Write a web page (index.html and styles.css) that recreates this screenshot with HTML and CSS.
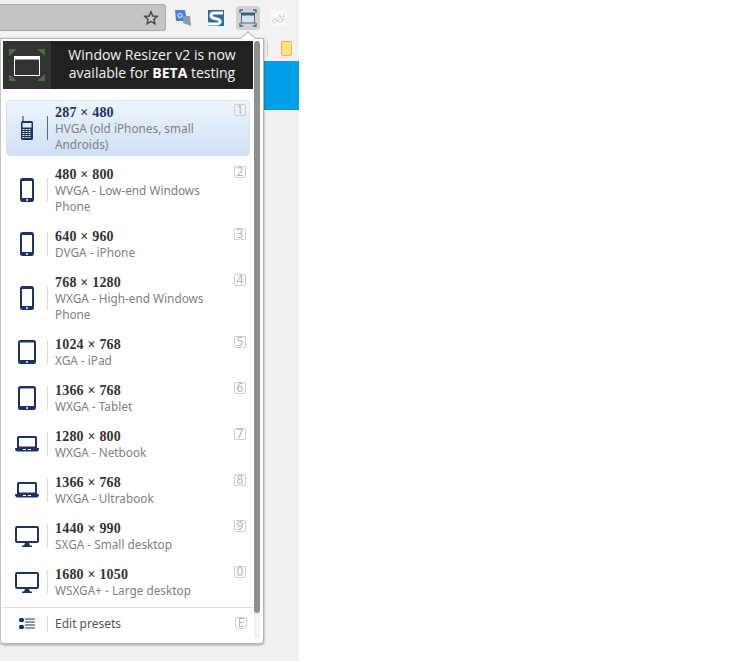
FILE: index.html
```html
<!DOCTYPE html>
<html lang="en">
<head>
<meta charset="utf-8">
<title>Window Resizer</title>
<link rel="stylesheet" href="styles.css">
</head>
<body>
<svg class="defs" width="0" height="0">
<defs>
<symbol id="i-feature" viewBox="0 0 24 24"><path fill="currentColor" d="M7.500 5V0h1v5h8A1.500 1.500 0 0 1 18 6.500v16a1.500 1.500 0 0 1-1.500 1.500h-9A1.500 1.500 0 0 1 6 22.500v-16A1.500 1.500 0 0 1 7.500 5z"/><rect x="7.500" y="7" width="9" height="4.500" fill="#e3edf8"/><path stroke="#e3edf8" stroke-width="1" stroke-dasharray="2 1" d="M7.500 13.500h9M7.500 15.500h9M7.500 17.500h9M7.500 19.500h9M7.500 21.500h9"/></symbol>
<symbol id="i-phone" viewBox="0 0 24 24"><path fill="currentColor" fill-rule="evenodd" d="M7.500 0h9A2.500 2.500 0 0 1 19 2.500v19a2.500 2.500 0 0 1-2.500 2.500h-9A2.500 2.500 0 0 1 5 21.500v-19A2.500 2.500 0 0 1 7.500 0zM7 3v17h10V3z"/><circle cx="12" cy="22" r="1" fill="#fff"/></symbol>
<symbol id="i-tablet" viewBox="0 0 24 24"><path fill="currentColor" fill-rule="evenodd" d="M5.500 0h13A2.500 2.500 0 0 1 21 2.500v19a2.500 2.500 0 0 1-2.500 2.500h-13A2.500 2.500 0 0 1 3 21.500v-19A2.500 2.500 0 0 1 5.500 0zM5 2.500V20h14V2.500z"/><circle cx="12" cy="22" r="1" fill="#fff"/></symbol>
<symbol id="i-laptop" viewBox="0 0 24 16"><path fill="currentColor" fill-rule="evenodd" d="M3.500 0h17A1.500 1.500 0 0 1 22 1.500V12H2V1.500A1.500 1.500 0 0 1 3.500 0zM4 2v8.500h16V2z"/><path fill="currentColor" d="M.5 12h23c.3 0 .5.200.5.500 0 1.800-1 3-2.500 3h-19C1 15.500 0 14.300 0 12.500c0-.3.200-.5.500-.5z"/><path stroke="#fff" d="M8 13.500h3M13 13.500h3"/></symbol>
<symbol id="i-desktop" viewBox="0 0 24 21"><path fill="currentColor" fill-rule="evenodd" d="M2 0h20a2 2 0 0 1 2 2v13a2 2 0 0 1-2 2H2a2 2 0 0 1-2-2V2a2 2 0 0 1 2-2zm0 2v13h20V2z"/><path fill="currentColor" d="M10 17h4l1 2.500h2V21H7v-1.500h2z"/></symbol>
</defs>
</svg>
<div class="browser">
  <header class="toolbar">
    <div class="omnibox">
      <svg class="star" viewBox="0 0 16 16"><path fill="none" stroke="#444" stroke-width="1.400" d="M8 1.800l1.800 4.200 4.500.4-3.400 3 1 4.400L8 11.500l-3.900 2.300 1-4.400-3.400-3 4.500-.4z"/></svg>
    </div>
    <div class="ext ext-wide">
      <svg class="ext-icon" viewBox="0 0 16 16"><path fill="#4a80d8" d="M0 0h10l2 11H1z"/><path fill="#8b99a8" d="M8 6h7l1 10-8-3z"/><circle cx="5" cy="5.500" r="2" fill="none" stroke="#fff"/></svg>
    </div>
    <div class="ext">
      <svg class="ext-icon" viewBox="0 0 16 16"><rect width="16" height="16" fill="#336d9a"/><path fill="none" stroke="#fff" stroke-width="3" d="M15 3H6Q3 3 3 5.500T7 8.500 12 11 9 14H0"/></svg>
    </div>
    <div class="ext ext-active">
      <svg class="ext-icon" viewBox="0 0 18 18"><path fill="none" stroke="#3e6f79" stroke-width="1.300" d="M1 4V1h3M14 1h3v3M17 14v3h-3M4 17H1v-3"/><rect x="2.500" y="4" width="13" height="10" fill="#d9e2ea" stroke="#4c6a84"/><rect x="2.500" y="4" width="13" height="2.500" fill="#3f617f"/></svg>
    </div>
    <div class="ext">
      <svg class="ext-icon" viewBox="0 0 16 16"><rect width="16" height="16" fill="#f9f9f9"/><path fill="none" stroke="#a8a8a8" stroke-dasharray="1 1" d="M1 11l3-2 2 2 3-6 2 5 3-7M3 13l4-2 3 1 4-3"/></svg>
    </div>
  </header>
  <nav class="bookmarks">
    <span class="bm-divider"></span>
    <span class="bm-note"></span>
  </nav>
  <div class="hero-strip"></div>
  <div class="window-rest"></div>
</div>

<section class="popup">
  <span class="popup-arrow"></span>
  <div class="promo">
    <div class="promo-icon">
      <svg viewBox="0 0 48 48" width="48" height="48">
        <path fill="#47703f" d="M6 8h8l-8 7zM42 8h-8l8 7zM6 40h8l-8-7zM42 40h-8l8-7z"/>
        <rect x="11.500" y="15.500" width="25" height="19" fill="#333" stroke="#fff"/>
        <rect x="11" y="15" width="26" height="3.500" fill="#fff"/>
      </svg>
    </div>
    <p class="promo-text">Window Resizer v2 is now<br>available for <b>BETA</b> testing</p>
  </div>
  <ul class="presets">
    <li class="preset preset-selected">
      <span class="preset-icon"><svg width="24" height="24"><use href="#i-feature"/></svg></span>
      <div class="preset-body"><strong>287 × 480</strong><span>HVGA (old iPhones, small Androids)</span></div>
      <kbd>1</kbd>
    </li>
    <li class="preset">
      <span class="preset-icon"><svg width="24" height="24"><use href="#i-phone"/></svg></span>
      <div class="preset-body"><strong>480 × 800</strong><span>WVGA - Low-end Windows Phone</span></div>
      <kbd>2</kbd>
    </li>
    <li class="preset">
      <span class="preset-icon"><svg width="24" height="24"><use href="#i-phone"/></svg></span>
      <div class="preset-body"><strong>640 × 960</strong><span>DVGA - iPhone</span></div>
      <kbd>3</kbd>
    </li>
    <li class="preset">
      <span class="preset-icon"><svg width="24" height="24"><use href="#i-phone"/></svg></span>
      <div class="preset-body"><strong>768 × 1280</strong><span>WXGA - High-end Windows Phone</span></div>
      <kbd>4</kbd>
    </li>
    <li class="preset">
      <span class="preset-icon"><svg width="24" height="24"><use href="#i-tablet"/></svg></span>
      <div class="preset-body"><strong>1024 × 768</strong><span>XGA - iPad</span></div>
      <kbd>5</kbd>
    </li>
    <li class="preset">
      <span class="preset-icon"><svg width="24" height="24"><use href="#i-tablet"/></svg></span>
      <div class="preset-body"><strong>1366 × 768</strong><span>WXGA - Tablet</span></div>
      <kbd>6</kbd>
    </li>
    <li class="preset">
      <span class="preset-icon"><svg width="24" height="16"><use href="#i-laptop"/></svg></span>
      <div class="preset-body"><strong>1280 × 800</strong><span>WXGA - Netbook</span></div>
      <kbd>7</kbd>
    </li>
    <li class="preset">
      <span class="preset-icon"><svg width="24" height="16"><use href="#i-laptop"/></svg></span>
      <div class="preset-body"><strong>1366 × 768</strong><span>WXGA - Ultrabook</span></div>
      <kbd>8</kbd>
    </li>
    <li class="preset">
      <span class="preset-icon"><svg width="24" height="21"><use href="#i-desktop"/></svg></span>
      <div class="preset-body"><strong>1440 × 990</strong><span>SXGA - Small desktop</span></div>
      <kbd>9</kbd>
    </li>
    <li class="preset">
      <span class="preset-icon"><svg width="24" height="21"><use href="#i-desktop"/></svg></span>
      <div class="preset-body"><strong>1680 × 1050</strong><span>WSXGA+ - Large desktop</span></div>
      <kbd>0</kbd>
    </li>
  </ul>
  <footer class="edit">
    <span class="preset-icon">
      <svg width="16" height="12" viewBox="0 0 16 12"><g fill="#1c3464"><rect width="5" height="4" rx="1.500"/><rect y="7" width="5" height="4" rx="1.500"/><path d="M6 .5h10v1H6zM6 3.500h10v1H6zM6 6.500h10v1H6zM6 9.500h10v1H6z"/></g></svg>
    </span>
    <div class="edit-label">Edit presets</div>
    <kbd>E</kbd>
  </footer>
  <div class="scroll-track"><div class="scroll-thumb"></div></div>
</section>
</body>
</html>
```
FILE: styles.css
```css
* { box-sizing: border-box; }
html, body { margin: 0; height: 100%; background: #fff; }
body { font-family: "Noto Sans", sans-serif; overflow: hidden; }
.defs { position: absolute; }

.browser { width: 299px; height: 661px; background: #f1f1f1; display: flex; flex-direction: column; }
.toolbar { height: 36px; display: flex; align-items: center; gap: 3px; background: #f2f2f2; }
.omnibox { flex: none; width: 166px; height: 27px; margin-top: -1px; margin-right: 2px; background: #c4c4c4; border: 1px solid #a9a9a9; border-left: 0; border-radius: 0 3px 3px 0; display: flex; align-items: center; justify-content: flex-end; padding-right: 6px; }
.star { width: 16px; height: 16px; }
.ext { flex: none; width: 24px; height: 24px; display: flex; align-items: center; justify-content: center; border-radius: 3px; margin-right: 5px; }
.ext-wide { margin-right: 6px; }
.ext-active { background: #cfd2d5; margin-right: 4px; }
.ext-icon { width: 16px; height: 16px; }
.ext-active .ext-icon { width: 18px; height: 18px; }

.bookmarks { height: 25px; background: #f2f2f2; display: flex; align-items: center; justify-content: flex-end; gap: 13px; padding-right: 7px; }
.bm-divider { width: 1px; height: 16px; background: #c9c9c9; }
.bm-note { width: 11px; height: 15px; background: #fde27f; border: 1px solid #e4bd45; border-radius: 2px; }
.hero-strip { height: 49px; background: #009fe8; }
.window-rest { flex: 1; background: #f1f1f1; }

.popup { position: absolute; left: 0; top: 38px; width: 264px; height: 606px; background: #fff; border: 1px solid #b5b5b5; border-left-color: #c4c4c4; border-radius: 0 0 4px 4px; box-shadow: 0 1px 3px rgba(0,0,0,.35); padding: 2px 10px 0 2px; }
.popup-arrow { position: absolute; left: 242px; top: -6px; width: 10px; height: 10px; background: #fff; border-left: 1px solid #b5b5b5; border-top: 1px solid #b5b5b5; transform: rotate(45deg); }
.promo { position: relative; height: 48px; width: 250px; display: flex; background: #212121; color: #fff; }
.promo-icon { flex: none; width: 48px; height: 48px; background: #333; }
.promo-icon svg { display: block; }
.promo-text { flex: 1; margin: 0; font: 14px/18px "Open Sans", sans-serif; white-space: nowrap; text-align: center; padding-top: 5px; color: #f3f3f3; }
.promo-text b { font-weight: 700; color: #fff; }

.presets { list-style: none; margin: 11px 0 0; padding: 0 0 0 3px; width: 247px; }
.preset { position: relative; display: flex; align-items: center; padding: 7px 4px 7px 0; }
.preset-selected { background: linear-gradient(#eef4fc, #cfe0f5); border: 1px solid #d4e2f2; border-radius: 4px; margin-bottom: 3px; padding: 3px 3px 3px 0; }
.preset-icon { flex: none; width: 42px; height: 24px; display: flex; align-items: center; justify-content: center; color: #1c3464; border-right: 1px solid #d9d9d9; }
.preset-selected .preset-icon { width: 41px; border-right-color: #3f6ea3; }
.preset-body { flex: 1; padding-left: 7px; font-size: 11.800px; line-height: 16px; color: #808080; min-width: 0; }
.preset-body strong { display: block; font: 700 14px/18px "Liberation Serif", serif; height: 16px; padding-top: 0; letter-spacing: .2px; color: #333; }
.preset-selected .preset-body strong { color: #1c3464; }
.preset-body span { display: block; padding-right: 26px; }
kbd { position: absolute; right: 4px; top: 7px; width: 12px; height: 12px; display: flex; align-items: center; justify-content: center; border: 1px solid #cdcdcd; border-radius: 2px; font: 12px/1 "Noto Sans", sans-serif; color: #b4b4b4; }
.preset-selected kbd { top: 3px; right: 3px; }

.edit { position: relative; display: flex; align-items: center; width: 250px; height: 32px; margin-top: 2px; border-top: 1px solid #dcdcdc; padding: 0 0 0 3px; }
.edit .preset-icon { height: 16px; }
.edit-label { padding-left: 7px; font-size: 12px; color: #555; }
.edit kbd { right: 6px; top: 9px; }

.scroll-track { position: absolute; right: 3px; top: 2px; bottom: 4px; width: 6px; background: #f2f2f2; border-radius: 3px; }
.scroll-thumb { height: 572px; background: #8f8f8f; border-radius: 3px; }
```
